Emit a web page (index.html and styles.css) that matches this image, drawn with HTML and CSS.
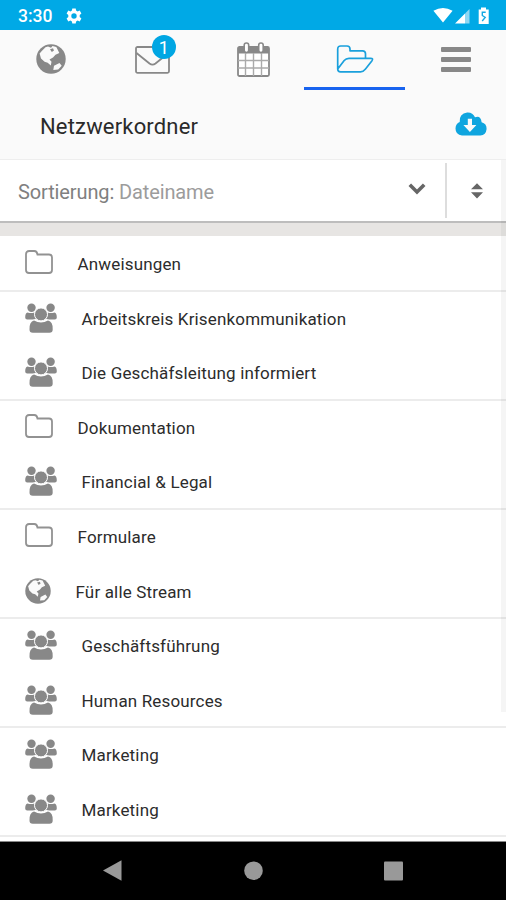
FILE: index.html
```html
<!DOCTYPE html>
<html lang="de">
<head>
<meta charset="utf-8">
<title>Netzwerkordner</title>
<link rel="stylesheet" href="styles.css">
</head>
<body>
<svg class="defs" aria-hidden="true">
  <symbol id="globe" viewBox="0 0 30 30">
    <circle cx="15" cy="15" r="14.7" fill="#888"/>
    <path fill="#fafafa" d="M9.5 3.2 L6 6.7 L3.6 9.6 L5 14.4 L8.6 17.8 L11.7 18.8 L14.8 21.6 L15.5 17.8 L13.5 15.6 L17 13.6 L19.5 10.7 L23.3 9 L21.6 5.5 L20.3 3 L16.5 2.1 L15 3.8 L12 2.5 Z M18 21.8 L23.5 19 L25.7 21.8 L22.2 25.6 L17.3 26 Z"/>
    <path fill="#888" d="M14 5.2 l3 -1 1 2.2 -2.2 1.6z"/>
  </symbol>
  <symbol id="folder" viewBox="0 0 28 24">
    <path d="M1 4.2 Q1 1 4.2 1 H9.3 Q12 1 12.5 4.5 H24 Q27 4.5 27 7.5 V20 Q27 23 24 23 H4 Q1 23 1 20 Z" fill="none" stroke="#929292" stroke-width="1.8"/>
  </symbol>
  <symbol id="group" viewBox="0 0 32 30">
    <g fill="#888">
      <circle cx="6.5" cy="4.7" r="4.2"/><circle cx="25.6" cy="4.7" r="4.2"/>
      <path d="M2.5 9.4 Q6 10.5 9.4 9.4 Q9 13 12 15.8 L7.5 16.5 H2.2 Q.2 16.5 .2 14.5 Q.2 10 2.5 9.4Z M29.5 9.4 Q26 10.5 22.6 9.4 Q23 13 20 15.8 L24.5 16.5 H29.8 Q31.8 16.5 31.8 14.5 Q31.8 10 29.5 9.4Z"/>
      <path d="M9 17.6 Q16 21.6 23 17.6 Q28 18.5 27.7 26.5 Q27.7 29.8 24.4 29.8 H7.8 Q4.5 29.8 4.5 26.5 Q4.3 18.5 9 17.6Z"/>
      <circle cx="16" cy="11.4" r="6.5" stroke="#fff" stroke-width="1"/>
    </g>
  </symbol>
</svg>

<header class="status">
  <span class="clock">3:30</span>
  <svg class="gear" viewBox="0 0 16 16"><path fill="#fff" fill-rule="evenodd" d="M6.3 .4 H9.7 L10.1 2.6 L11.6 3.4 L13.7 2.6 L15.4 5.5 L13.7 7 V9 L15.4 10.5 L13.7 13.4 L11.6 12.6 L10.1 13.4 L9.7 15.6 H6.3 L5.9 13.4 L4.4 12.6 L2.3 13.4 L.6 10.5 L2.3 9 V7 L.6 5.5 L2.3 2.6 L4.4 3.4 L5.9 2.6 Z M8 5.3 A2.7 2.7 0 1 0 8 10.7 A2.7 2.7 0 1 0 8 5.3Z"/></svg>
  <svg class="signals" viewBox="0 0 58 18">
    <path fill="#fff" d="M.4 3.8 Q10 -2 19.6 3.8 L10 15.6Z M22 16.5 L32 6.5 V16.5Z"/>
    <path fill="#8fd7f3" d="M32 6.5 L36.5 2 V16.5 H32Z"/>
    <path fill="#fff" d="M45.7 2.5 H48 V.5 H53 V2.5 H55.7 V17 H45.7Z"/>
    <path fill="none" stroke="#16a9e3" stroke-width="1.4" d="M52.7 5.2 H49.3 V8.5 L52.2 10.5 L49.2 14"/>
  </svg>
</header>

<nav class="tabs">
  <a class="tab"><svg class="tab-globe"><use href="#globe"/></svg></a>
  <a class="tab"><span class="mail">
    <svg viewBox="0 0 35 28"><rect x="1" y="1" width="33" height="25.8" rx="1.5" fill="none" stroke="#888" stroke-width="1.8"/><path d="M1.5 7 L14.5 17.5 Q17.5 19.8 20.5 17.5 L33.5 7" fill="none" stroke="#888" stroke-width="1.8"/></svg>
    <b class="badge">1</b></span></a>
  <a class="tab"><svg class="cal" viewBox="0 0 33 35">
    <rect x="1" y="5" width="31" height="29" rx="1.5" fill="#fff" stroke="#888" stroke-width="1.8"/>
    <path d="M1 5 H32 V11.5 H1Z" fill="#888"/>
    <path d="M8.5 11 V34 M16.5 11 V34 M24.5 11 V34 M1 18.5 H32 M1 26 H32" stroke="#aaa" stroke-width="1.4"/>
    <rect x="7.2" y="1" width="4.5" height="9.5" rx="2.2" fill="#fff" stroke="#888" stroke-width="1.6"/><rect x="21.7" y="1" width="4.5" height="9.5" rx="2.2" fill="#fff" stroke="#888" stroke-width="1.6"/>
  </svg></a>
  <a class="tab active"><svg class="open" viewBox="0 0 38 28"><path fill="none" stroke="#1aa0dc" stroke-width="1.7" stroke-linejoin="round" d="M1.7 24 V4 Q1.7 1 4.7 1 H11 Q14 1 14 4 V5.8 H26.5 Q29.5 5.8 29.5 8.8 V13.3 M1.7 24 L8.2 15.5 Q10 13.3 13 13.3 H34.5 Q37.8 13.3 35.8 16 L29.5 24 Q27.2 26.9 24.5 26.9 H4.5 Q1.7 26.9 1.7 24Z"/></svg></a>
  <a class="tab"><span class="burger"><i></i><i></i><i></i></span></a>
</nav>

<section class="title">
  <h1>Netzwerkordner</h1>
  <svg class="cloud" viewBox="0 0 32 24"><path fill="#0fa5df" d="M7 23.5 Q.5 22.8 .5 16.5 Q.6 11.6 4.7 10 Q4 1.5 12.2 .5 Q17.7 .2 20 5.2 Q25.8 3 26.6 10.2 Q31.7 11.5 31.6 17 Q31 23 25.3 23.5Z"/><path fill="#fafafa" d="M12.8 6.7 H17 V13 H21.4 L14.9 20 L8.4 13 H12.8Z"/></svg>
</section>

<section class="sort">
  <div class="sort-field"><span>Sortierung: <em>Dateiname</em></span>
    <svg class="chev" viewBox="0 0 18 12"><path d="M1.8 1.8 L9 9 L16.2 1.8" fill="none" stroke="#666" stroke-width="3.6"/></svg></div>
  <div class="sort-dir"><svg viewBox="0 0 12 16"><path fill="#666" d="M0 6.3 L6 .3 L12 6.3Z M0 9.3 H12 L6 15.5Z"/></svg></div>
</section>
<div class="gap"></div>

<main class="list">
  <ul>
    <li class="dir line"><svg><use href="#folder"/></svg><span>Anweisungen</span></li>
    <li class="team"><svg><use href="#group"/></svg><span>Arbeitskreis Krisenkommunikation</span></li>
    <li class="team line"><svg><use href="#group"/></svg><span>Die Geschäfsleitung informiert</span></li>
    <li class="dir"><svg><use href="#folder"/></svg><span>Dokumentation</span></li>
    <li class="team line"><svg><use href="#group"/></svg><span>Financial &amp; Legal</span></li>
    <li class="dir"><svg><use href="#folder"/></svg><span>Formulare</span></li>
    <li class="world line"><svg><use href="#globe"/></svg><span>Für alle Stream</span></li>
    <li class="team"><svg><use href="#group"/></svg><span>Geschäftsführung</span></li>
    <li class="team line"><svg><use href="#group"/></svg><span>Human Resources</span></li>
    <li class="team"><svg><use href="#group"/></svg><span>Marketing</span></li>
    <li class="team line"><svg><use href="#group"/></svg><span>Marketing</span></li>
  </ul>
</main>
<footer class="keys">
  <svg viewBox="0 0 506 58"><path fill="#999" d="M103 28.5 L121.5 18.3 V38.7Z"/><circle cx="253.5" cy="28.7" r="9.3" fill="#999"/><rect x="384" y="19.5" width="19" height="19" rx="1" fill="#999"/></svg>
</footer>
<div class="scrollbar"></div>
</body>
</html>
```

FILE: styles.css
```css
* { box-sizing: border-box; }
body {
  margin: 0;
  width: 506px;
  height: 900px;
  display: flex;
  flex-direction: column;
  overflow: hidden;
  position: relative;
  background: #fff;
  font-family: Roboto, "Liberation Sans", sans-serif;
}
svg { display: block; flex: none; }
.defs { position: absolute; width: 0; height: 0; }

.status {
  height: 30px;
  flex: none;
  display: flex;
  align-items: center;
  padding: 1px 15px 0 18px;
  background: #00a9e6;
  color: #fff;
}
.clock { width: 48px; font-size: 17.5px; font-weight: 500; line-height: 30px; }
.gear { width: 16px; height: 16px; }
.signals { width: 58px; height: 18px; margin-left: auto; }

.tabs {
  height: 62px;
  flex: none;
  display: grid;
  grid-template-columns: repeat(5, 1fr);
  padding: 0 0 2px;
  background: #fafafa;
}
.tab {
  display: flex;
  align-items: center;
  justify-content: center;
  padding-left: 1px;
  border-bottom: 3px solid transparent;
}
.active { border-bottom-color: #1863ef; }
.tab-globe { width: 30px; height: 30px; margin-top: 1px; }
.mail { position: relative; margin-top: 3px; }
.mail svg { width: 35px; height: 28px; }
.badge {
  position: absolute;
  left: 17px;
  top: -11px;
  width: 24px;
  height: 24px;
  border-radius: 50%;
  background: #00a6e3;
  color: #fff;
  font-size: 18px;
  font-weight: 400;
  line-height: 25px;
  text-align: center;
}
.cal { width: 33px; height: 35px; margin-top: 1px; }
.open { width: 38px; height: 28px; }
.burger { display: flex; flex-direction: column; gap: 5px; margin-top: 1px; }
.burger i { width: 30px; height: 5px; border-radius: 1px; background: #888; }

.title {
  height: 68px;
  flex: none;
  display: flex;
  align-items: center;
  justify-content: space-between;
  padding: 0 19px 0 40px;
  background: #fafafa;
  border-bottom: 1px solid #eee;
}
h1 { margin: 1px 0 0; color: #2a2a2a; font-size: 22px; font-weight: 400; letter-spacing: .17px; }
.cloud { width: 32px; height: 24px; margin-top: -4px; }

.sort { height: 63px; flex: none; display: flex; border-bottom: 2px solid #bdbdbd; }
.sort-field {
  width: 447px;
  margin: 3px 0;
  padding: 2px 19px 0 18px;
  display: flex;
  align-items: center;
  justify-content: space-between;
  border-right: 2px solid #ddd;
  color: #808080;
  font-size: 20px;
  letter-spacing: -.12px;
}
.sort-field em { font-style: normal; color: #9c9c9c; }
.chev { width: 18px; height: 12px; margin-top: -6px; }
.sort-dir { flex: 1; display: flex; align-items: center; justify-content: center; }
.sort-dir svg { width: 12px; height: 16px; }
.gap { height: 13px; flex: none; background: #e7e5e3; }

.list { height: 606px; flex: none; overflow: hidden; border-bottom: 1px solid #888; }
ul { margin: 0; padding: 1px 0 0; list-style: none; }
li {
  height: 54.55px;
  display: flex;
  align-items: center;
  padding-left: 25px;
  border-bottom: 2px solid transparent;
  color: #2c2c2c;
  font-size: 17px;
  letter-spacing: .16px;
}
.line { border-bottom-color: #ececec; }
.dir svg { width: 28px; height: 24px; margin: -2px 24.5px 0 0; }
.team svg { width: 32px; height: 30px; margin-right: 24.5px; }
.world svg { width: 26px; height: 26px; margin: 0 24.5px 0 0; }
li span { margin-top: 2px; }

.keys { height: 58px; flex: none; background: #000; }
.keys svg { width: 506px; height: 58px; }
.scrollbar { position: absolute; right: 0; top: 160px; width: 5px; height: 552px; background: rgba(0, 0, 0, .04); }
```
